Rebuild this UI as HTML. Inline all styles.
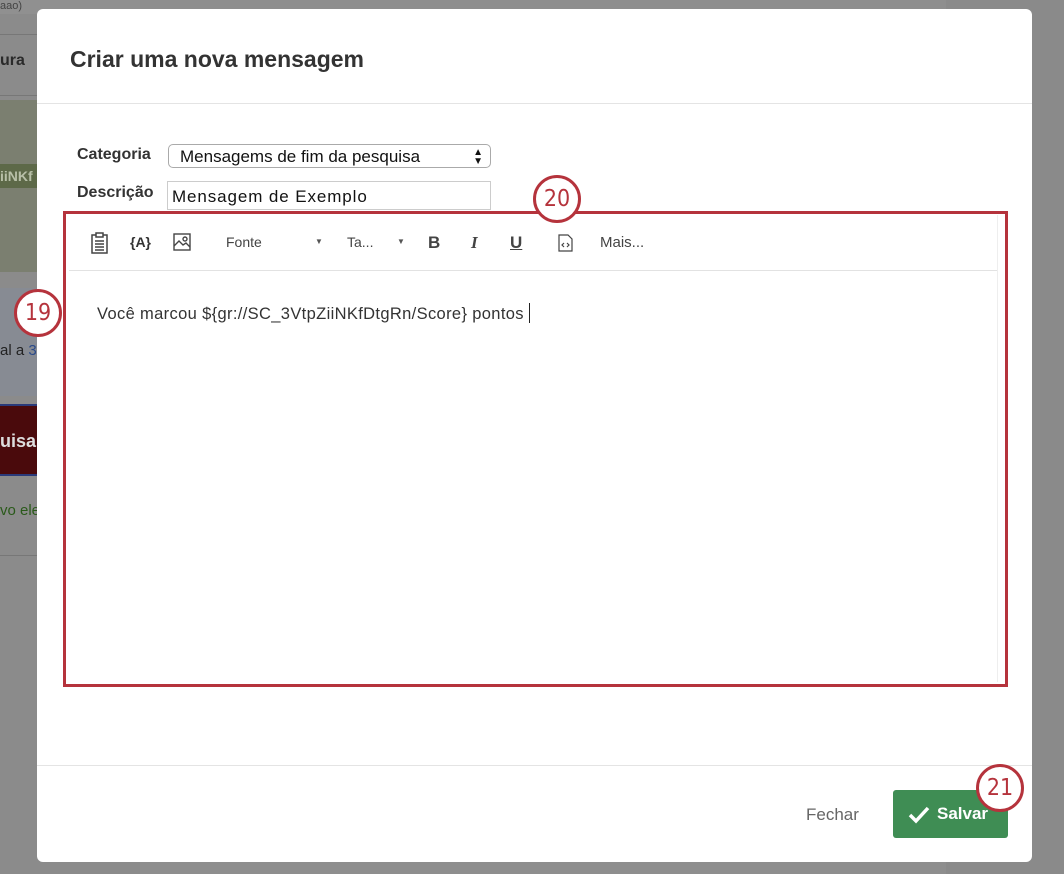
<!DOCTYPE html>
<html><head><meta charset="utf-8"><style>
*{margin:0;padding:0;box-sizing:border-box}
body{width:1064px;height:874px;overflow:hidden;background:#8a8a8a;font-family:"Liberation Sans",Arial,sans-serif;position:relative}
.a{position:absolute}
.circ{position:absolute;width:48px;height:48px;border:3px solid #b5333c;border-radius:50%;background:#fff;color:#b5333c;font-size:23px;text-align:center;line-height:42px;font-family:"DejaVu Sans Condensed","Liberation Sans Narrow",sans-serif}
</style></head><body>
<div class="a" style="left:0;top:0;width:140px;height:874px;background:#8b8b8b"></div>
<div class="a" style="left:0;top:0;width:140px;height:14px;background:#909090;font-size:11px;color:#444">aao)</div>
<div class="a" style="left:0;top:34px;width:140px;height:1px;background:#777"></div>
<div class="a" style="left:0;top:52px;font-size:16px;font-weight:bold;color:#2a2a2a">ura</div>
<div class="a" style="left:0;top:95px;width:140px;height:1px;background:#777"></div>
<div class="a" style="left:0;top:100px;width:140px;height:172px;background:#7b7f70"></div>
<div class="a" style="left:0;top:164px;width:140px;height:24px;background:#5d6948;color:#b8c0a8;font-size:14px;font-weight:bold;line-height:24px">iiNKf</div>
<div class="a" style="left:0;top:288px;width:140px;height:108px;background:#878b93"></div>
<div class="a" style="left:0;top:342px;font-size:15px;color:#222">al a <span style="color:#2a4a8a">3</span></div>
<div class="a" style="left:0;top:404px;width:140px;height:72px;background:#4a0a0c;border-top:2px solid #2a3a7a;border-bottom:2px solid #2a3a7a;color:#ddd;font-size:18px;font-weight:bold;line-height:70px">uisa</div>
<div class="a" style="left:0;top:502px;font-size:15px;color:#2a5a1a">vo ele</div>
<div class="a" style="left:0;top:555px;width:140px;height:1px;background:#777"></div>
<div class="a" style="left:140px;top:0;width:806px;height:874px;background:#8e8e8e"></div>
<div class="a" style="left:37px;top:9px;width:995px;height:853px;background:#fff;border-radius:6px"></div>
<div class="a" style="left:70px;top:46px;font-size:23px;font-weight:bold;color:#333">Criar uma nova mensagem</div>
<div class="a" style="left:37px;top:103px;width:995px;height:1px;background:#e4e4e4"></div>
<div class="a" style="left:77px;top:146px;font-size:16px;font-weight:bold;color:#333">Categoria</div>
<div class="a" style="left:168px;top:144px;width:323px;height:24px;border:1px solid #aaa;border-radius:5px;font-size:17px;color:#111;padding:2px 0 0 11px">Mensagems de fim da pesquisa<span class="a" style="right:7px;font-size:10px;line-height:9px;top:3px">▲<br>▼</span></div>
<div class="a" style="left:77px;top:184px;font-size:16px;font-weight:bold;color:#333">Descrição</div>
<div class="a" style="left:167px;top:181px;width:324px;height:29px;border:1px solid #ccc;font-size:17px;letter-spacing:0.9px;color:#111;padding:5px 0 0 4px">Mensagem de Exemplo</div>
<div class="a" style="left:63px;top:211px;width:945px;height:476px;border:3px solid #b5333c"></div>
<div class="a" style="left:69px;top:270px;width:929px;height:1px;background:#e2e2e2"></div>
<div class="a" style="left:997px;top:215px;width:1px;height:467px;background:#eee"></div>
<svg class="a" style="left:90px;top:232px" width="20" height="22" viewBox="0 0 20 22" fill="none" stroke="#444" stroke-width="1.5"><rect x="2" y="3" width="15" height="18"/><rect x="6" y="1" width="7" height="4" fill="#fff"/><path d="M5 9h9M5 12h9M5 15h9M5 18h9"/></svg>
<div class="a" style="left:130px;top:234px;font-size:14px;font-weight:bold;color:#333">{A}</div>
<svg class="a" style="left:173px;top:233px" width="18" height="18" viewBox="0 0 18 18" fill="none" stroke="#444" stroke-width="1.4"><rect x="1" y="1" width="16" height="16"/><path d="M1 13l5-5 4 4 3-2 4 4"/><circle cx="12" cy="6" r="2"/></svg>
<div class="a" style="left:226px;top:234px;font-size:14px;color:#444">Fonte</div>
<div class="a" style="left:315px;top:237px;font-size:8px;color:#555">▼</div>
<div class="a" style="left:347px;top:234px;font-size:14px;color:#444">Ta...</div>
<div class="a" style="left:397px;top:237px;font-size:8px;color:#555">▼</div>
<div class="a" style="left:428px;top:233px;font-size:17px;font-weight:bold;color:#444">B</div>
<div class="a" style="left:471px;top:233px;font-size:17px;font-weight:bold;font-style:italic;font-family:'Liberation Serif',serif;color:#444">I</div>
<div class="a" style="left:510px;top:233px;font-size:17px;font-weight:bold;text-decoration:underline;color:#444">U</div>
<svg class="a" style="left:558px;top:234px" width="15" height="18" viewBox="0 0 15 18" fill="none" stroke="#444" stroke-width="1.2"><path d="M1 1h9l4 4v12H1z"/><path d="M6 9l-2 2 2 2M9 9l2 2-2 2"/></svg>
<div class="a" style="left:600px;top:234px;font-size:15px;color:#444">Mais...</div>
<div class="a" style="left:97px;top:303px;font-size:16.5px;letter-spacing:0.35px;color:#333">Você marcou ${gr://SC_3VtpZiiNKfDtgRn/Score} pontos <span style="display:inline-block;width:1px;height:20px;background:#222;vertical-align:-4px"></span></div>
<div class="circ" style="left:14px;top:289px">19</div>
<div class="circ" style="left:533px;top:175px">20</div>
<div class="a" style="left:37px;top:765px;width:995px;height:1px;background:#e4e4e4"></div>
<div class="a" style="left:806px;top:805px;font-size:17px;color:#666">Fechar</div>
<div class="a" style="left:893px;top:790px;width:115px;height:48px;background:#3f8d54;border-radius:3px;color:#fff;font-size:17px;font-weight:bold;line-height:48px;padding-left:44px">Salvar</div>
<svg class="a" style="left:908px;top:806px" width="22" height="18" viewBox="0 0 22 18"><path d="M2 9l6 6L20 2" stroke="#fff" stroke-width="3.5" fill="none"/></svg>
<div class="circ" style="left:976px;top:764px">21</div>
</body></html>
